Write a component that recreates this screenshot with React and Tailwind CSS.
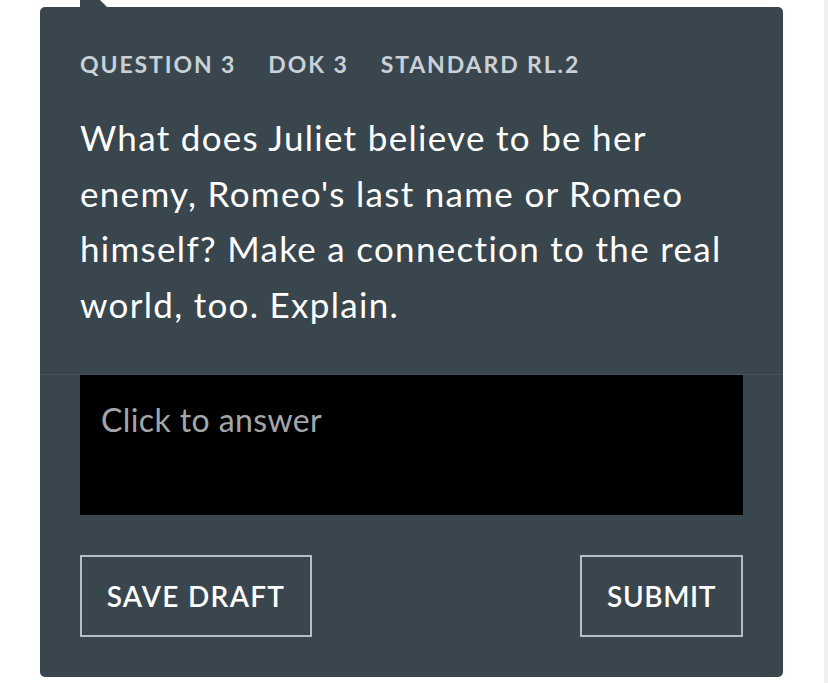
export default function App() {
  return (
    <div className="relative w-[828px] h-[683px] bg-white overflow-hidden" style={{ fontFamily: 'Lato, "Noto Sans", sans-serif' }}>
      <div className="absolute right-0 top-0 w-[4px] h-full bg-[#efefef]" />
      <div className="pt-[7px] pl-[40px]">
        <div className="relative w-[743px] h-[670px] bg-[#3a464e] rounded-[5px]">
          <svg className="absolute left-[40px] top-[-7px]" width="30" height="8" viewBox="0 0 30 8">
            <polygon points="0,0 20,0 28,8 0,8" fill="#3a464e" />
          </svg>
          <div className="px-[40px] pt-[43px] pb-[42px] border-b border-[#44515a]">
            <div className="flex gap-[32px] text-[23px] font-bold tracking-[1.9px] text-[#c9d1d7] leading-[28px]">
              <span>QUESTION 3</span>
              <span>DOK 3</span>
              <span>STANDARD RL.2</span>
            </div>
            <p className="mt-[32px] text-[35px] leading-[55.5px] tracking-[1.3px] text-white whitespace-nowrap">
              What does Juliet believe to be her<br />
              enemy, Romeo's last name or Romeo<br />
              himself? Make a connection to the real<br />
              world, too. Explain.
            </p>
          </div>
          <div className="px-[40px]">
            <div className="h-[140px] bg-black px-[21px] pt-[25px] text-[32px] leading-[40px] tracking-[0.4px] text-[#a3a7aa]">
              Click to answer
            </div>
            <div className="mt-[40px] flex justify-between">
              <button className="w-[232px] h-[82px] border-2 border-[#b3bfc7] text-white text-[28px] font-semibold tracking-[1.3px]">
                SAVE DRAFT
              </button>
              <button className="w-[163px] h-[82px] border-2 border-[#b3bfc7] text-white text-[28px] font-semibold tracking-[0.6px]">
                SUBMIT
              </button>
            </div>
          </div>
        </div>
      </div>
    </div>
  );
}
